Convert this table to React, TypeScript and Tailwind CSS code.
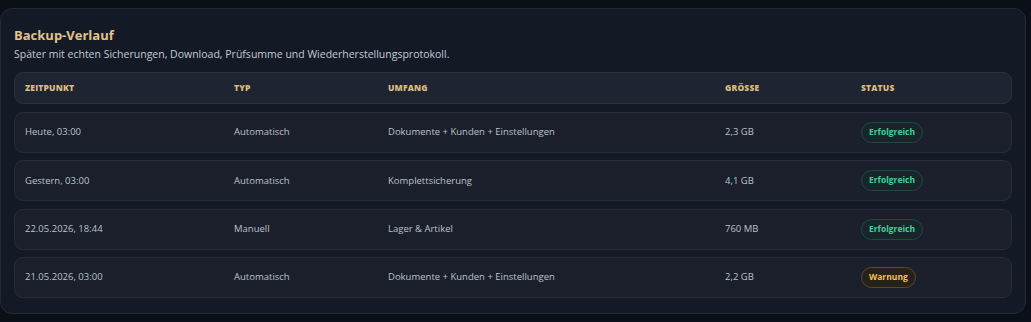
const rows = [
    { time: "Heute, 03:00", type: "Automatisch", scope: "Dokumente + Kunden + Einstellungen", size: "2,3 GB", status: "ok" },
    { time: "Gestern, 03:00", type: "Automatisch", scope: "Komplettsicherung", size: "4,1 GB", status: "ok" },
    { time: "22.05.2026, 18:44", type: "Manuell", scope: "Lager & Artikel", size: "760 MB", status: "ok" },
    { time: "21.05.2026, 03:00", type: "Automatisch", scope: "Dokumente + Kunden + Einstellungen", size: "2,2 GB", status: "warn" },
];

const cols = "grid grid-cols-[209px_154px_337px_136px_1fr] items-center";

function StatusBadge({ status }: { status: string }) {
    if (status === "warn") {
        return (
            <span className="inline-flex h-[21px] items-center rounded-full border border-[#5a4a2c] bg-[#272219] px-[7px] text-[8.5px] font-bold text-[#f5c04a]">
                Warnung
            </span>
        );
    }
    return (
        <span className="inline-flex h-[21px] items-center rounded-full border border-[#1f4a40] bg-[#16262a] px-[7px] text-[8.5px] font-bold text-[#3ed39a]">
            Erfolgreich
        </span>
    );
}

export default function App() {
    return (
        <div className="h-[322px] w-[1031px] bg-[#0b0f18] pt-[8px] font-['Open_Sans','Noto_Sans',sans-serif]">
            <section className="mr-[5px] h-[306px] rounded-[12px] border border-[#232a37] bg-[#141a25] px-[13px] pt-[17px]">
                <h2 className="text-[13px] font-bold leading-[18px] text-[#e3c387]">Backup-Verlauf</h2>
                <p className="mt-[3px] text-[10.5px] leading-[14px] text-[#c2c9d6]">
                    Später mit echten Sicherungen, Download, Prüfsumme und Wiederherstellungsprotokoll.
                </p>

                <div className="mt-[11px] flex flex-col gap-[7.3px]">
                    <div className={`${cols} mb-[0.7px] h-[32px] rounded-[9px] border border-[#2a3140] bg-[#1e2431] pl-[10px] text-[8.5px] font-extrabold tracking-[0.02em] text-[#d9bb7e]`}>
                        <span>ZEITPUNKT</span>
                        <span>TYP</span>
                        <span>UMFANG</span>
                        <span>GRÖSSE</span>
                        <span>STATUS</span>
                    </div>
                    {rows.map((row) => (
                        <div
                            key={row.time}
                            className={`${cols} h-[41px] rounded-[9px] border border-[#262c39] bg-[#1a1f2b] pl-[10px] text-[9.5px] text-[#bac1cd]`}
                        >
                            <span>{row.time}</span>
                            <span>{row.type}</span>
                            <span>{row.scope}</span>
                            <span>{row.size}</span>
                            <span>
                                <StatusBadge status={row.status} />
                            </span>
                        </div>
                    ))}
                </div>
            </section>
        </div>
    );
}
